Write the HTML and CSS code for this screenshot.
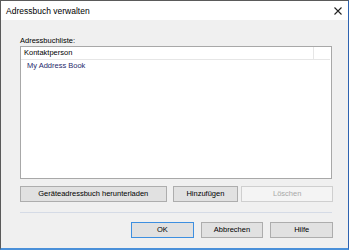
FILE: index.html
```html
<!DOCTYPE html>
<html lang="de">
<head>
<meta charset="utf-8">
<title>Adressbuch verwalten</title>
<link rel="stylesheet" href="styles.css">
</head>
<body>
<div class="window">
  <div class="titlebar">
    <span class="title">Adressbuch verwalten</span>
    <svg class="close" width="8" height="8" viewBox="0 0 8 8"><path d="M0.5 0.5 L7.5 7.5 M7.5 0.5 L0.5 7.5" stroke="#222" stroke-width="1.1"/></svg>
  </div>
  <div class="content">
    <div class="label">Adressbuchliste:</div>
    <div class="list">
      <div class="list-header">
        <div class="col-main">Kontaktperson</div>
        <div class="col-rest"></div>
      </div>
      <div class="list-item">My Address Book</div>
    </div>
    <div class="row actions">
      <button class="btn wide">Geräteadressbuch herunterladen</button>
      <button class="btn mid">Hinzufügen</button>
      <button class="btn del" disabled>Löschen</button>
    </div>
    <div class="separator"></div>
    <div class="row footer">
      <button class="btn small default">OK</button>
      <button class="btn small">Abbrechen</button>
      <button class="btn small">Hilfe</button>
    </div>
  </div>
</div>
</body>
</html>
```

FILE: styles.css
```css
html, body {
  margin: 0;
  padding: 0;
  background: #ffffff;
}
body {
  font-family: "Liberation Sans", Arial, sans-serif;
  color: #000;
}
.window {
  width: 347px;
  height: 247px;
  border-left: 1px solid #5a5a5a;
  border-top: 1px solid #5a5a5a;
  border-right: 1px solid #2d62b0;
  border-bottom: 2px solid #4a90d9;
  display: flex;
  flex-direction: column;
  background: #f0f0f0;
}
.titlebar {
  height: 19px;
  background: #ffffff;
  display: flex;
  align-items: center;
  justify-content: space-between;
  padding: 0 6px 0 5px;
}
.title {
  font-size: 8.5px;
  color: #000;
}
.close {
  display: block;
}
.content {
  flex: 1;
  padding: 16px 15px 0 19px;
  display: flex;
  flex-direction: column;
}
.label {
  font-size: 7.5px;
  line-height: 10px;
  height: 10px;
}
.list {
  width: 310px;
  height: 131px;
  background: #ffffff;
  border: 1px solid #a8a8a8;
  font-size: 7.5px;
}
.list-header {
  display: flex;
  height: 12px;
  border-bottom: 1px solid #e6e6e6;
  line-height: 12px;
  margin-right: 1px;
}
.col-main {
  flex: 1;
  padding-left: 3px;
  border-right: 1px solid #e6e6e6;
  color: #000;
}
.col-rest {
  width: 16px;
}
.list-item {
  padding-left: 6px;
  line-height: 12px;
  color: #1f2a6b;
}
.row {
  display: flex;
}
.actions {
  margin-top: 7px;
  gap: 6px;
}
.btn {
  height: 16px;
  margin: 0;
  padding: 0;
  background: #e1e1e1;
  border: 1px solid #adadad;
  font-family: "Liberation Sans", Arial, sans-serif;
  font-size: 7.5px;
  color: #000;
  line-height: 14px;
}
.btn.wide { width: 147px; }
.btn.mid { width: 66px; }
.btn.del {
  width: 92px;
  background: #f4f4f4;
  border-color: #cfcfcf;
  color: #a8a8a8;
  margin-left: -3px;
}
.separator {
  margin-top: 10px;
  width: 312px;
  height: 1px;
  background: #d5dbe6;
}
.footer {
  margin-top: 9px;
  padding-left: 111px;
  gap: 7px;
}
.btn.small { width: 64px; }
.btn.default {
  border-color: #3d8fe0;
}
```
